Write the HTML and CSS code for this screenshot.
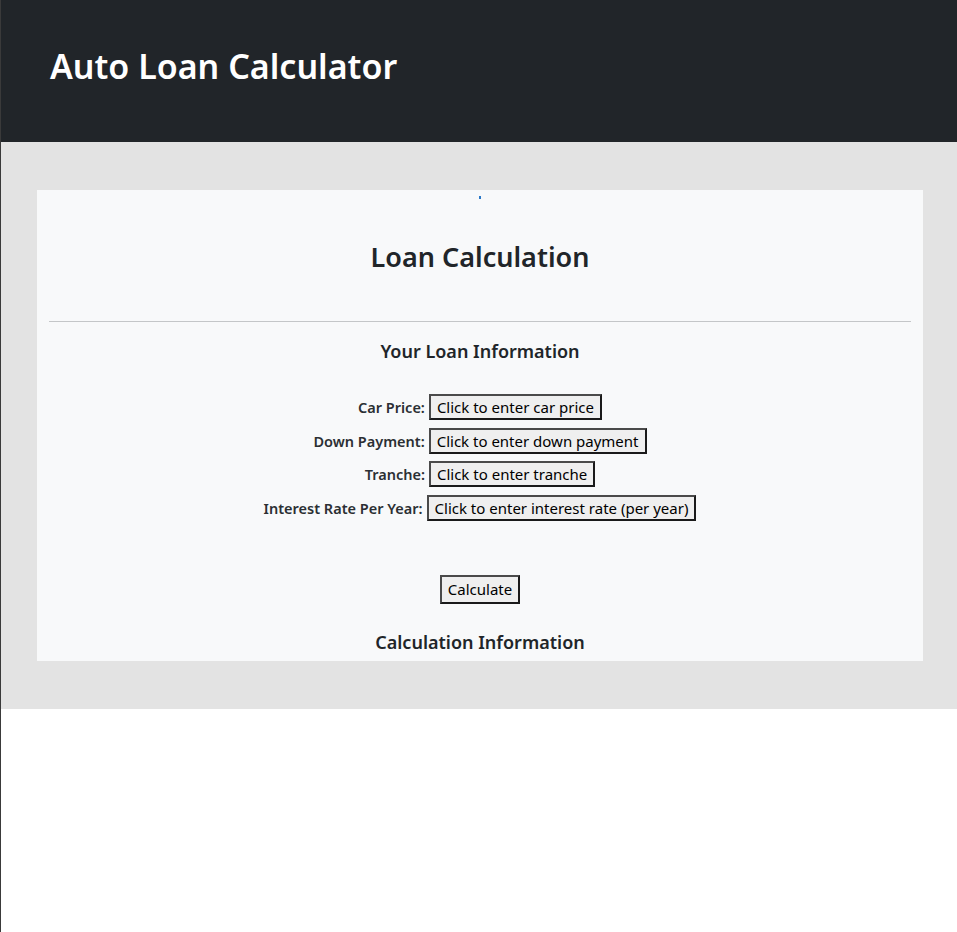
FILE: index.html
```html
<!DOCTYPE html>
<html lang="en">
<head>
<meta charset="utf-8">
<title>Auto Loan Calculator</title>
<link rel="stylesheet" href="styles.css">
</head>
<body>
<header class="topbar">
  <h1 class="brand">Auto Loan Calculator</h1>
</header>
<main class="stage">
  <section class="card">
    <div class="mark"></div>
    <h2 class="card-title">Loan Calculation</h2>
    <hr class="rule">
    <h3 class="sub-title">Your Loan Information</h3>
    <div class="form">
      <div class="row"><span class="label">Car Price:</span><button class="field">Click to enter car price</button></div>
      <div class="row"><span class="label">Down Payment:</span><button class="field">Click to enter down payment</button></div>
      <div class="row"><span class="label">Tranche:</span><button class="field">Click to enter tranche</button></div>
      <div class="row"><span class="label">Interest Rate Per Year:</span><button class="field">Click to enter interest rate (per year)</button></div>
    </div>
    <div class="actions"><button class="field calc">Calculate</button></div>
    <h3 class="sub-title last">Calculation Information</h3>
  </section>
</main>
</body>
</html>
```
FILE: styles.css
```css
html, body {
  margin: 0;
  padding: 0;
}
body {
  font-family: "Noto Sans", "Open Sans", sans-serif;
  color: #212529;
  background: #fff;
  border-left: 1px solid #3a3a3a;
  min-height: 932px;
  box-sizing: border-box;
}
.topbar {
  background: #212529;
  height: 142px;
  display: flex;
  align-items: center;
  padding-left: 49px;
  box-sizing: border-box;
}
.brand {
  margin: 0;
  color: #fff;
  font-size: 34px;
  font-weight: 600;
  padding-bottom: 10px;
}
.stage {
  background: #e3e3e3;
  padding: 48px 34px 48px 36px;
}
.card {
  background: #f8f9fa;
  padding: 0 12px;
  height: 471px;
  display: flex;
  flex-direction: column;
  align-items: center;
}
.mark {
  width: 2px;
  height: 3px;
  background: #2a78c8;
  margin-top: 6px;
  margin-left: 0;
}
.card-title {
  margin: 38px 0 0;
  font-size: 27px;
  font-weight: 600;
  line-height: 40px;
}
.rule {
  align-self: stretch;
  border: 0;
  border-top: 1px solid #c4c6c8;
  margin: 44px 0 0;
}
.sub-title {
  margin: 15px 0 0;
  font-size: 18px;
  font-weight: 600;
  line-height: 28px;
}
.form {
  margin-top: 29px;
  display: flex;
  flex-direction: column;
  align-items: center;
  gap: 7.5px;
}
.row {
  display: flex;
  align-items: center;
  gap: 4px;
}
.label {
  font-size: 14.5px;
  font-weight: 600;
  color: #2b2f33;
}
.field {
  font-family: inherit;
  font-size: 15px;
  color: #000;
  background: #efefef;
  border: 2px solid #1a1a1a;
  border-top-color: #4a4a4a;
  border-left-color: #4a4a4a;
  padding: 1px 6px;
  height: 26px;
  line-height: 20px;
}
.actions {
  margin-top: 54px;
}
.calc {
  height: 29px;
  padding: 1px 6px;
}
.sub-title.last {
  margin-top: 24px;
}
```
